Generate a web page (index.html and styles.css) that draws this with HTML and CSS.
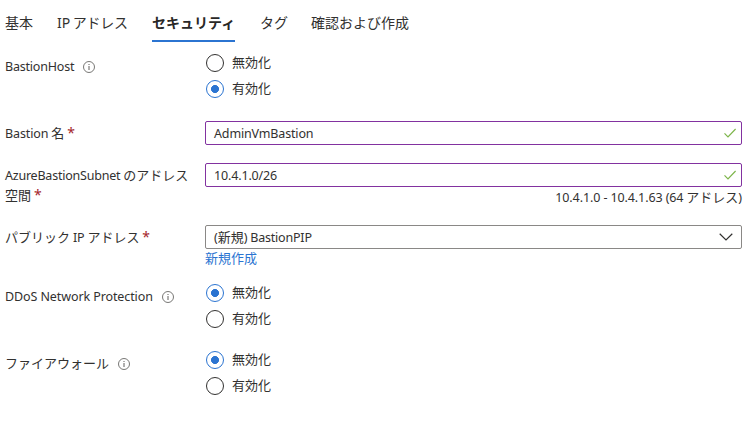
FILE: index.html
```html
<!DOCTYPE html>
<html lang="ja">
<head>
<meta charset="utf-8">
<title>セキュリティ</title>
<link rel="stylesheet" href="styles.css">
</head>
<body>
<svg class="defs" width="0" height="0">
  <symbol id="info" viewBox="0 0 12 12"><circle cx="6" cy="6" r="5.5" fill="none" stroke="#605e5c" stroke-width=".85"/><path d="M6 5v4M6 3v1" stroke="#605e5c" fill="none"/></symbol>
  <symbol id="check" viewBox="0 0 12 10"><path d="M.5 5.3 4 8.8 11.6 1" fill="none" stroke="#7db54a" stroke-width="1.2"/></symbol>
</svg>
<nav class="tabs">
  <a class="tab t1">基本</a>
  <a class="tab t2"><span class="en">IP</span> アドレス</a>
  <a class="tab t3 active">セキュリティ</a>
  <a class="tab t4">タグ</a>
  <a class="tab t5">確認および作成</a>
</nav>
<main class="form">
  <section class="row host">
    <div class="label low"><span class="en l-host">BastionHost</span><svg class="info"><use href="#info"/></svg></div>
    <div class="options">
      <div class="option"><i class="radio"></i><span class="choice">無効化</span></div>
      <div class="option"><i class="radio on"></i><span class="choice">有効化</span></div>
    </div>
  </section>
  <section class="row name">
    <div class="label"><span class="en">Bastion</span> 名 <b class="req">*</b></div>
    <div class="input valid"><span class="en value">AdminVmBastion</span><svg class="check"><use href="#check"/></svg></div>
  </section>
  <section class="row subnet">
    <div class="label"><span class="en l-subnet">AzureBastionSubnet</span> のアドレス<br>空間 <b class="req">*</b></div>
    <div>
      <div class="input valid"><span class="en value">10.4.1.0/26</span><svg class="check"><use href="#check"/></svg></div>
      <div class="hint"><span class="en">10.4.1.0 - 10.4.1.63 (64</span> アドレス<span class="en">)</span></div>
    </div>
  </section>
  <section class="row pip">
    <div class="label">パブリック <span class="en">IP</span> アドレス <b class="req">*</b></div>
    <div>
      <div class="input"><span><span class="en">(</span>新規<span class="en">)</span> <span class="en v-pip">BastionPIP</span></span><svg class="chevron" viewBox="0 0 14 8"><path d="M.7.8 7 7 13.3.8" fill="none" stroke="#323130" stroke-width="1.2"/></svg></div>
      <a class="link">新規作成</a>
    </div>
  </section>
  <section class="row ddos">
    <div class="label low"><span class="en">DDoS Network Protection</span><svg class="info"><use href="#info"/></svg></div>
    <div class="options">
      <div class="option"><i class="radio on"></i><span class="choice">無効化</span></div>
      <div class="option"><i class="radio"></i><span class="choice">有効化</span></div>
    </div>
  </section>
  <section class="row firewall">
    <div class="label low"><span class="choice">ファイアウォール</span><svg class="info"><use href="#info"/></svg></div>
    <div class="options">
      <div class="option"><i class="radio on"></i><span class="choice">無効化</span></div>
      <div class="option"><i class="radio"></i><span class="choice">有効化</span></div>
    </div>
  </section>
</main>
</body>
</html>
```
FILE: styles.css
```css
* { box-sizing: border-box; }
body {
  margin: 0;
  background: #fff;
  color: #323130;
  font: 13px/20px "Noto Sans CJK JP", sans-serif;
}
.defs { display: block; }
.en { font-family: "Noto Sans", sans-serif; font-size: 12.5px; letter-spacing: -.1px; line-height: 1; }
.tabs { display: flex; height: 42px; padding-left: 5px; font-size: 14px; }
.tab { height: 42px; padding-top: 12px; line-height: 20px; white-space: nowrap; }
.tab .en { font-size: 14px; }
.t1 { width: 52px; }
.t2 { width: 95px; letter-spacing: -.3px; }
.t3 { width: 83px; margin-right: 25px; }
.t4 { width: 51px; }
.active { border-bottom: 2px solid #2b74d1; font-weight: 700; color: #292827; }
.form { padding: 8px 8px 0 5px; }
.row { display: grid; grid-template-columns: 200px 537px; align-items: start; white-space: nowrap; }
.host { height: 71px; }
.name { height: 42px; }
.subnet { height: 62px; }
.pip { height: 55px; }
.ddos { height: 67px; }
.label { padding-top: 2px; }
.low { display: flex; align-items: center; gap: 9px; height: 27px; padding-top: 7px; }
.l-host { letter-spacing: -.2px; }
.l-subnet { letter-spacing: -.22px; }
.info { width: 12px; height: 12px; }
.req { color: #a4262c; font: 400 14px/14px "Noto Sans", sans-serif; }
.option { display: flex; align-items: center; gap: 8.5px; height: 26px; padding-left: .5px; }
.choice { padding-bottom: 2px; }
.radio { width: 18px; height: 18px; border: 1px solid #323130; border-radius: 50%; }
.radio.on { border-color: #2b74d1; background: radial-gradient(circle, #2b74d1 3.7px, transparent 4.3px); }
.input {
  display: flex;
  align-items: center;
  justify-content: space-between;
  height: 24px;
  padding: 0 5px 0 8px;
  border: 1px solid #8a8886;
  border-radius: 2px;
}
.input.valid { border-color: #8232a0; }
.value { padding-top: 2px; letter-spacing: -.15px; }
.v-pip { letter-spacing: -.2px; }
.check { width: 12px; height: 10px; }
.chevron { width: 14px; height: 8px; margin-right: 3px; }
.hint { text-align: right; }
.link { display: block; line-height: 18px; color: #2b74d1; }
```
